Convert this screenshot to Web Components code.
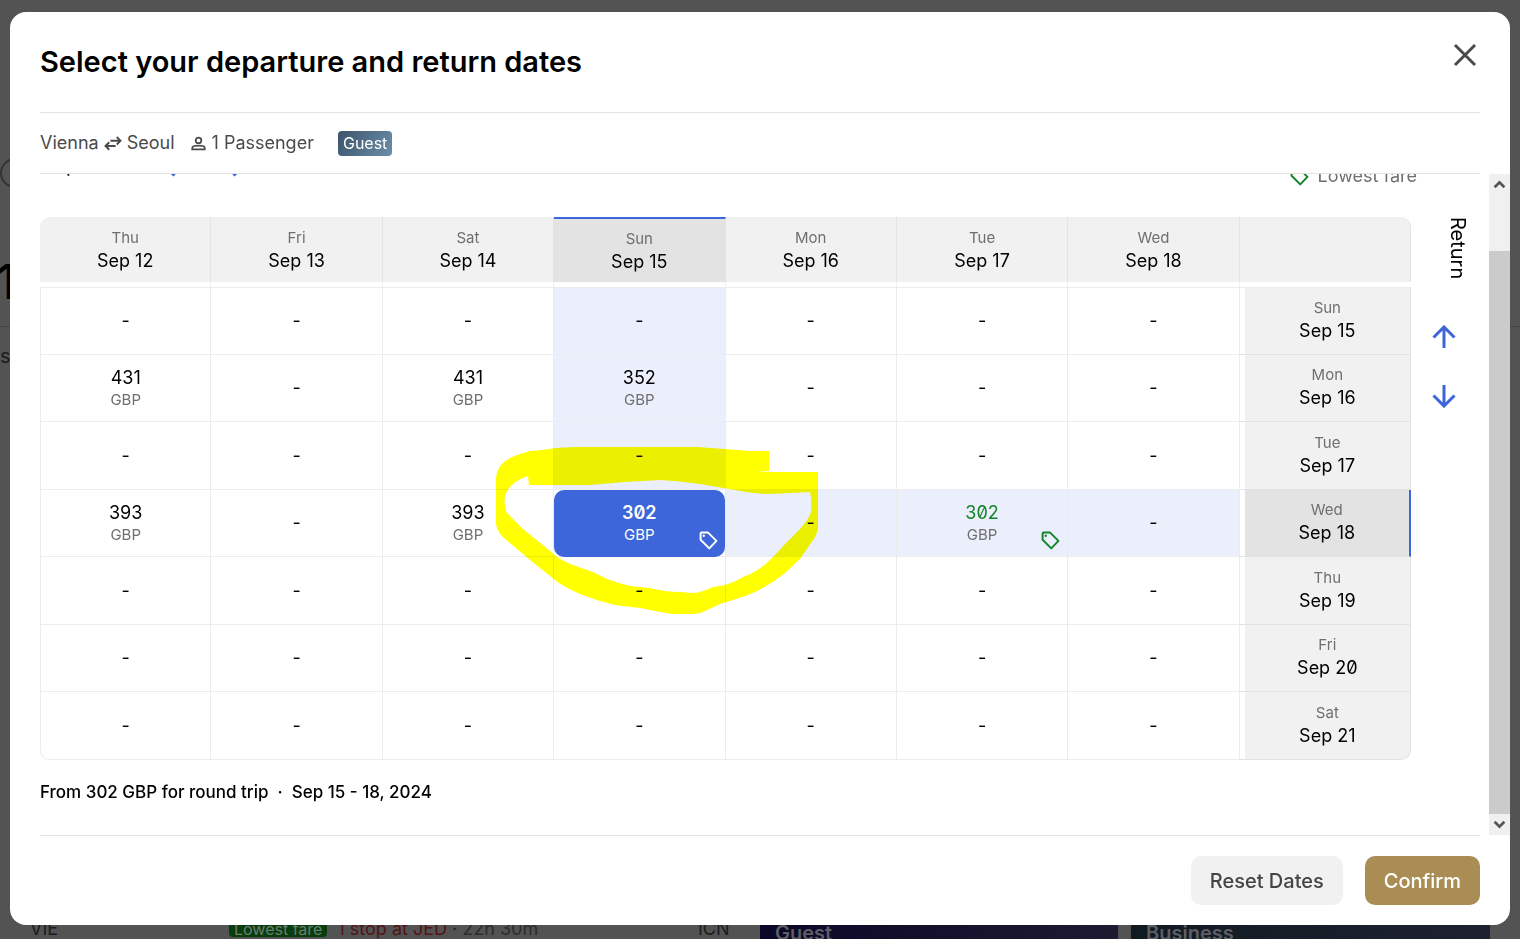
<!DOCTYPE html>
<html lang="en">
<head>
<meta charset="utf-8">
<title>Select your departure and return dates</title>
<style>
  :root {
    --color-blue: #3c66d9;
    --color-line: #e3e3e3;
    --color-muted: #6f6f6f;
    --color-dark: #4a4a4a;
    --color-green: #14852a;
  }

  body {
    margin: 0;
    height: 100vh;
    overflow: hidden;
    background: #535353;
    font-family: Inter, "Liberation Sans", sans-serif;
    color: #000;
  }
</style>
</head>
<body>

<results-page></results-page>

<date-dialog>
  <span slot="title">Select your departure and return dates</span>
  <trip-summary slot="summary" from="Vienna" to="Seoul" passengers="1 Passenger" cabin="Guest"></trip-summary>
  <fare-calendar></fare-calendar>
  <action-button slot="actions">Reset Dates</action-button>
  <action-button slot="actions" kind="primary">Confirm</action-button>
</date-dialog>

<script>
  const ICONS = {
    close: '<path d="M2 2L22 22M22 2L2 22" stroke-width="3"/>',
    up: '<path d="M12 23V2M1.500 12.500L12 2L22.500 12.500" stroke-width="3"/>',
    down: '<path d="M12 1V22M1.500 11.500L12 22L22.500 11.500" stroke-width="3"/>',
    left: '<path d="M23 12H2M12.500 1.500L2 12L12.500 22.500" stroke-width="3"/>',
    right: '<path d="M1 12H22M11.500 1.500L22 12L11.500 22.500" stroke-width="3"/>',
    swap: '<path d="M8.500 9H22M17 4L22 9L17 14M15.500 16H2M7 11L2 16L7 21" stroke-width="2.500"/>',
    person: '<circle cx="12" cy="7" r="4.500" stroke-width="2.800"/><path d="M2 21.500V19C2 16 7 15.500 12 15.500S22 16 22 19V21.500Z" stroke-width="2.800"/>',
    tag: '<path d="M2 3.500A1.500 1.500 0 0 1 3.500 2H11.500L22 12.500L13 22L2 11Z" stroke-width="2.500" stroke-linejoin="round"/><circle cx="6" cy="6" r="1.500" fill="currentColor" stroke="none"/>',
    chevronUp: '<path d="M3 17L12 8L21 17" stroke-width="5"/>',
    chevronDown: '<path d="M3 7L12 16L21 7" stroke-width="5"/>'
  };

  class UiIcon extends HTMLElement {
    constructor() {
      super();
      this.attachShadow({ mode: 'open' });
    }

    connectedCallback() {
      const size = this.getAttribute('size') || 24;
      this.shadowRoot.innerHTML = `
        <style>
          :host { display: inline-flex; flex: none; }
          svg { display: block; fill: none; stroke: currentColor; }
        </style>
        <svg width="${size}" height="${size}" viewBox="0 0 24 24" aria-hidden="true">${ICONS[this.getAttribute('name')]}</svg>`;
    }
  }
  customElements.define('ui-icon', UiIcon);

  // The dimmed search results behind the dialog
  class ResultsPage extends HTMLElement {
    constructor() {
      super();
      this.attachShadow({ mode: 'open' });
      this.shadowRoot.innerHTML = `
        <style>
          :host {
            display: flex;
            flex-direction: column;
            height: 100vh;
            box-sizing: border-box;
            padding-top: 158px;
            overflow: hidden;
            color: #1c1c1c;
          }
          .ring {
            width: 26px;
            height: 26px;
            border: 2px solid #333;
            border-radius: 50%;
          }
          h2 { margin: 66px 0 0 -4px; font-size: 48px; line-height: 56px; font-weight: 500; color: #000; }
          hr { width: 100%; height: 1px; margin: 16px 0 0; border: 0; background: #454545; }
          p { margin: 17px 0 0; font-size: 20px; line-height: 24px; }
          .row {
            display: grid;
            grid-template-columns: 199px 1fr 62px 358px 372px;
            margin-top: auto;
            padding: 0 30px;
            height: 24px;
            font-size: 18px;
            line-height: 28px;
            white-space: nowrap;
          }
          .flight { display: flex; gap: 10px; }
          .badge { padding: 0 5px; height: 22px; background: #083d0d; color: #6c7c6d; font-size: 16px; border-radius: 4px; }
          .stop { color: #541313; }
          .time { color: #2d2d2d; }
          .cabin { padding: 0 15px; line-height: 36px; font-size: 20px; font-weight: 600; color: #5e5e66; }
          .guest { background: linear-gradient(90deg, #0b0726, #1f1a32); }
          .business { margin-left: 13px; background: linear-gradient(90deg, #101a22, #1e222f); }
        </style>
        <div class="ring"></div>
        <h2>1</h2>
        <hr>
        <p>s</p>
        <div class="row">
          <span>VIE</span>
          <div class="flight">
            <span class="badge">Lowest fare</span>
            <span><span class="stop">1 stop at JED</span> · <span class="time">22h 30m</span></span>
          </div>
          <span>ICN</span>
          <span class="cabin guest">Guest</span>
          <span class="cabin business">Business</span>
        </div>`;
    }
  }
  customElements.define('results-page', ResultsPage);

  class TripSummary extends HTMLElement {
    constructor() {
      super();
      this.attachShadow({ mode: 'open' });
    }

    connectedCallback() {
      this.shadowRoot.innerHTML = `
        <style>
          :host {
            display: flex;
            align-items: center;
            font-size: 18px;
            line-height: 24px;
            color: var(--color-dark);
          }
          .route { display: flex; align-items: center; gap: 5px; margin-right: 16px; }
          .people { display: flex; align-items: center; gap: 6px; margin-right: 24px; }
          .cabin {
            padding: 0 5px;
            border-radius: 4px;
            font-size: 16px;
            line-height: 25px;
            color: #fff;
            background: linear-gradient(120deg, #3c546b, #6b8ea8);
          }
        </style>
        <span class="route">
          <span class="from"></span>
          <ui-icon name="swap" size="18"></ui-icon>
          <span class="to"></span>
        </span>
        <span class="people"><ui-icon name="person" size="15"></ui-icon><span class="count"></span></span>
        <span class="cabin"></span>`;

      this.shadowRoot.querySelector('.from').textContent = this.getAttribute('from');
      this.shadowRoot.querySelector('.to').textContent = this.getAttribute('to');
      this.shadowRoot.querySelector('.count').textContent = this.getAttribute('passengers');
      this.shadowRoot.querySelector('.cabin').textContent = this.getAttribute('cabin');
    }
  }
  customElements.define('trip-summary', TripSummary);

  class ActionButton extends HTMLElement {
    constructor() {
      super();
      this.attachShadow({ mode: 'open' });
      this.shadowRoot.innerHTML = `
        <style>
          :host { display: block; }
          button {
            height: 49px;
            padding: 0 19px;
            border: 0;
            border-radius: 10px;
            font: 500 20px/24px Inter, "Liberation Sans", sans-serif;
            color: #444;
            background: #f1f1f1;
            cursor: pointer;
          }
          :host([kind="primary"]) button { color: #fff; background: #aa8d54; }
        </style>
        <button type="button"><slot></slot></button>`;
    }
  }
  customElements.define('action-button', ActionButton);

  // Table of fares: departure days across, return days down
  class FareMatrix extends HTMLElement {
    constructor() {
      super();
      this.attachShadow({ mode: 'open' });
      this.departures = ['Thu 12', 'Fri 13', 'Sat 14', 'Sun 15', 'Mon 16', 'Tue 17', 'Wed 18'];
      this.returns = ['Sun 15', 'Mon 16', 'Tue 17', 'Wed 18', 'Thu 19', 'Fri 20', 'Sat 21'];
      this.fares = {
        '1-0': 431, '1-2': 431, '1-3': 352,
        '3-0': 393, '3-2': 393, '3-3': 302, '3-5': 302
      };
      this.column = 3;
      this.row = 3;
      this.lowest = 302;
    }

    connectedCallback() {
      this.shadowRoot.innerHTML = `
        <style>
          :host { display: block; }
          table {
            width: 100%;
            table-layout: fixed;
            border-collapse: separate;
            border-spacing: 0;
            font-size: 18px;
            line-height: 22px;
            font-variant-numeric: slashed-zero;
          }
          th, td { box-sizing: border-box; padding: 0; text-align: center; font-weight: 400; }
          small { display: block; font-size: 15px; color: var(--color-muted); }
          th { padding-bottom: 2px; line-height: 23px; }
          thead th {
            height: 65px;
            background: #f1f1f1;
            border-right: 1px solid var(--color-line);
          }
          thead th:first-child { border-top-left-radius: 10px; }
          thead td { background: #f1f1f1; border-right: 1px solid var(--color-line); border-top-right-radius: 10px; }
          thead th.on { background: #e3e3e3; border-top: 2px solid var(--color-blue); }
          .gap td { height: 5px; background: none; border-radius: 0; border-right: 1px solid #efefef; }
          .gap td:last-child { border-right: 0; }
          tbody { --cell-line: #ececec; }
          tbody td {
            height: 67px;
            border-right: 1px solid var(--cell-line);
            border-bottom: 1px solid var(--cell-line);
          }
          tbody td:first-child { border-left: 1px solid var(--cell-line); }
          tbody tr:first-child > * { border-top: 1px solid var(--cell-line); }
          tbody tr:first-child > *, tbody tr:nth-child(3) > *, tbody tr:nth-child(5) > *, tbody tr:last-child > * { height: 68px; }
          tbody tr:last-child td:first-child { border-bottom-left-radius: 10px; }
          tbody th {
            height: 67px;
            padding: 0 0 4px 5px;
            border-right: 1px solid var(--color-line);
            border-bottom: 1px solid var(--color-line);
            background: linear-gradient(90deg, #fff 5px, #f1f1f1 5px);
          }
          tbody tr:last-child th { border-bottom-right-radius: 10px; }
          tbody th.on { border-right: 2px solid var(--color-blue); background: linear-gradient(90deg, #fff 5px, #e3e3e3 5px); }
          td.trail { background: #ebeffb; }
          button {
            position: relative;
            display: block;
            width: 100%;
            height: 67px;
            margin-bottom: -1px;
            padding: 1px 0 0;
            border: 0;
            border-radius: 10px;
            background: none;
            font: inherit;
            color: inherit;
            cursor: pointer;
          }
          button ui-icon { position: absolute; right: 7px; bottom: 7px; }
          .low { color: var(--color-green); }
          .picked { color: #fff; background: var(--color-blue); font-weight: 600; }
          .picked small { color: #fff; font-weight: 400; }
        </style>
        <table>
          <thead>
            <tr>${this.departures.map((day, i) => this.dayCell(day, i === this.column, 'col')).join('')}<td></td></tr>
            <tr class="gap">${'<td></td>'.repeat(8)}</tr>
          </thead>
          <tbody>
            ${this.returns.map((day, r) => `<tr>${this.departures.map((_, c) => this.fareCell(r, c)).join('')}${this.dayCell(day, r === this.row, 'row')}</tr>`).join('')}
          </tbody>
        </table>`;
    }

    dayCell(day, on, scope) {
      const [name, date] = day.split(' ');
      return `<th scope="${scope}" class="${on ? 'on' : ''}"><small>${name}</small>Sep ${date}</th>`;
    }

    fareCell(r, c) {
      const fare = this.fares[`${r}-${c}`];
      const trail = (c === this.column && r <= this.row) || (r === this.row && c > this.column);
      const picked = r === this.row && c === this.column;
      const low = fare === this.lowest;
      const cell = picked || !trail ? '' : 'trail';

      if (!fare) return `<td class="${cell}">-</td>`;
      return `<td class="${cell}"><button type="button" class="${picked ? 'picked' : low ? 'low' : ''}">
        ${fare}<small>GBP</small>${low ? '<ui-icon name="tag" size="19"></ui-icon>' : ''}
      </button></td>`;
    }
  }
  customElements.define('fare-matrix', FareMatrix);

  // Highlighter stroke laid over the selected fare
  class MarkerStroke extends HTMLElement {
    constructor() {
      super();
      this.attachShadow({ mode: 'open' });
      this.shadowRoot.innerHTML = `
        <style>
          :host { display: block; pointer-events: none; mix-blend-mode: multiply; }
          svg { display: block; fill: #ff0; }
        </style>
        <svg width="324" height="168" viewBox="496 447 324 168" fill-rule="evenodd" aria-hidden="true">
          <path d="M575 447H697L725 449L750 451H769V471L756 472L818 472V528Q817 536 811 543L800 559L785 573Q765 589 745 596L720 604L705 611Q700 614 694 614H672L655 611L640 608L615 605Q595 600 580 594Q562 586 555 580L530 560L510 543Q497 534 496 524V478Q497 461 520 454L530 451Q545 450 555 448Z
          M529 485H590L625 482L660 480Q680 481 700 484L735 490Q755 494 770 494L810 492Q812 500 811 512Q809 519 800 529L788 541L773 557Q760 571 743 577Q728 586 713 587Q700 593 693 593L680 592Q665 592 650 588L630 586Q618 583 607 579L593 572L570 564Q557 558 550 551L523 529L507 513Q502 502 507 491Q514 480 528 476Z"/>
        </svg>`;
    }
  }
  customElements.define('marker-stroke', MarkerStroke);

  class FareCalendar extends HTMLElement {
    constructor() {
      super();
      this.attachShadow({ mode: 'open' });
      this.shadowRoot.innerHTML = `
        <style>
          :host { display: block; padding: 46px 0 31px; }
          button { display: flex; padding: 0; border: 0; background: none; color: var(--color-blue); cursor: pointer; }
          .toolbar { display: flex; justify-content: space-between; height: 35px; margin-bottom: 29px; padding-right: 63px; }
          .departure { display: flex; align-items: center; gap: 36px; height: 24px; font-size: 20px; line-height: 24px; }
          .departure span { width: 86px; }
          .legend { display: flex; align-items: center; align-self: flex-end; gap: 9px; font-size: 18px; line-height: 24px; color: var(--color-muted); }
          .legend ui-icon { color: var(--color-green); }
          .board { position: relative; display: flex; }
          fare-matrix { flex: 1; }
          marker-stroke { position: absolute; left: 456px; top: 230px; }
          .return { display: flex; flex-direction: column; gap: 35px; width: 69px; box-sizing: border-box; padding-left: 21px; }
          .return span { writing-mode: vertical-rl; align-self: flex-start; margin-left: 14px; height: 73px; font-size: 20px; line-height: 24px; }
          .total { margin: 20px 0 0; font-size: 17px; line-height: 24px; font-weight: 500; white-space: pre; }
        </style>
        <div class="toolbar">
          <div class="departure">
            <span>Departure</span>
            <button type="button" aria-label="Earlier departure"><ui-icon name="left"></ui-icon></button>
            <button type="button" aria-label="Later departure"><ui-icon name="right"></ui-icon></button>
          </div>
          <div class="legend"><ui-icon name="tag" size="19"></ui-icon>Lowest fare</div>
        </div>
        <div class="board">
          <fare-matrix></fare-matrix>
          <div class="return">
            <span>Return</span>
            <button type="button" aria-label="Earlier return"><ui-icon name="up"></ui-icon></button>
            <button type="button" aria-label="Later return"><ui-icon name="down"></ui-icon></button>
          </div>
          <marker-stroke></marker-stroke>
        </div>
        <p class="total">From 302 GBP for round trip  ·  Sep 15 - 18, 2024</p>`;
    }
  }
  customElements.define('fare-calendar', FareCalendar);

  class DateDialog extends HTMLElement {
    constructor() {
      super();
      this.attachShadow({ mode: 'open' });
      this.shadowRoot.innerHTML = `
        <style>
          :host {
            position: fixed;
            inset: 12px 10px 14px;
            display: flex;
            flex-direction: column;
            background: #fff;
            border-radius: 16px;
          }
          header, .summary, footer { margin: 0 30px; display: flex; align-items: center; }
          header { justify-content: space-between; height: 100px; border-bottom: 1px solid var(--color-line); }
          h1 { margin: 0; font-size: 29px; line-height: 40px; font-weight: 600; }
          .close { display: flex; padding: 3px; margin-bottom: 14px; border: 0; background: none; color: var(--color-dark); cursor: pointer; }
          .summary { height: 60px; border-bottom: 1px solid var(--color-line); }
          .body { flex: 1; min-height: 0; display: flex; }
          .scroll { flex: 1; padding: 0 9px 0 30px; overflow-y: auto; scrollbar-width: none; }
          .bar { display: flex; flex-direction: column; width: 21px; background: #f0f0f0; }
          .bar button { display: flex; align-items: center; justify-content: center; height: 21px; padding: 0; border: 0; background: none; color: #555; }
          .thumb { flex: 1; margin-top: 56px; background: #cbcbcb; }
          footer { justify-content: flex-end; gap: 22px; height: 89px; border-top: 1px solid var(--color-line); }
        </style>
        <header>
          <h1><slot name="title"></slot></h1>
          <button class="close" type="button" aria-label="Close"><ui-icon name="close"></ui-icon></button>
        </header>
        <div class="summary"><slot name="summary"></slot></div>
        <div class="body">
          <div class="scroll"><slot></slot></div>
          <div class="bar">
            <button type="button" aria-label="Scroll up"><ui-icon name="chevronUp" size="13"></ui-icon></button>
            <div class="thumb"></div>
            <button type="button" aria-label="Scroll down"><ui-icon name="chevronDown" size="13"></ui-icon></button>
          </div>
        </div>
        <footer><slot name="actions"></slot></footer>`;
    }

    connectedCallback() {
      const scroll = this.shadowRoot.querySelector('.scroll');
      scroll.scrollTop = scroll.scrollHeight;
    }
  }
  customElements.define('date-dialog', DateDialog);
</script>
</body>
</html>
